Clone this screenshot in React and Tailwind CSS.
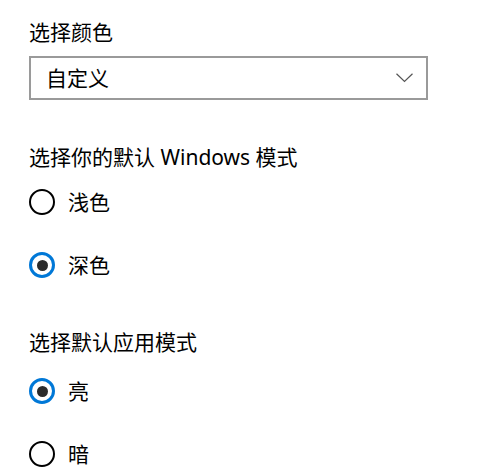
const font = { fontFamily: '"Noto Sans", "Noto Sans CJK SC", sans-serif' };

function Radio({ label, checked }) {
    return (
        <div className="flex items-center h-[40px]">
            {checked ? (
                <span className="w-[26px] h-[26px] rounded-full border-[3px] border-[#0078d7] flex items-center justify-center shrink-0">
                    <span className="w-[11px] h-[11px] rounded-full bg-[#2b2b2b]" />
                </span>
            ) : (
                <span className="w-[26px] h-[26px] rounded-full border-[2.5px] border-black shrink-0" />
            )}
            <span className="ml-[13px] text-[21px] leading-[28px] text-black">{label}</span>
        </div>
    );
}

export default function App() {
    return (
        <div className="w-[500px] h-[473px] bg-white overflow-hidden pt-[18px] pl-[29px]" style={font}>
            {/* 选择颜色 */}
            <div className="text-[21px] leading-[28px] text-black">选择颜色</div>
            <div className="mt-[10px] w-[399px] h-[44px] border-2 border-[#9a9a9a] flex items-center justify-between pl-[15px] pr-[13px]">
                <span className="text-[21px] leading-[28px] text-black">自定义</span>
                <svg width="17" height="10" viewBox="0 0 17 10" fill="none">
                    <polyline points="0.5,0.8 8.5,8.5 16.5,0.8" stroke="#555" strokeWidth="1.2" />
                </svg>
            </div>

            {/* Windows 模式 */}
            <div className="mt-[43px] text-[21px] leading-[28px] text-black">选择你的默认 Windows 模式</div>
            <div className="mt-[11px] flex flex-col gap-[23px]">
                <Radio label="浅色" />
                <Radio label="深色" checked />
            </div>

            {/* 应用模式 */}
            <div className="mt-[43px] text-[21px] leading-[28px] text-black">选择默认应用模式</div>
            <div className="mt-[15px] flex flex-col gap-[23px]">
                <Radio label="亮" checked />
                <Radio label="暗" />
            </div>
        </div>
    );
}
